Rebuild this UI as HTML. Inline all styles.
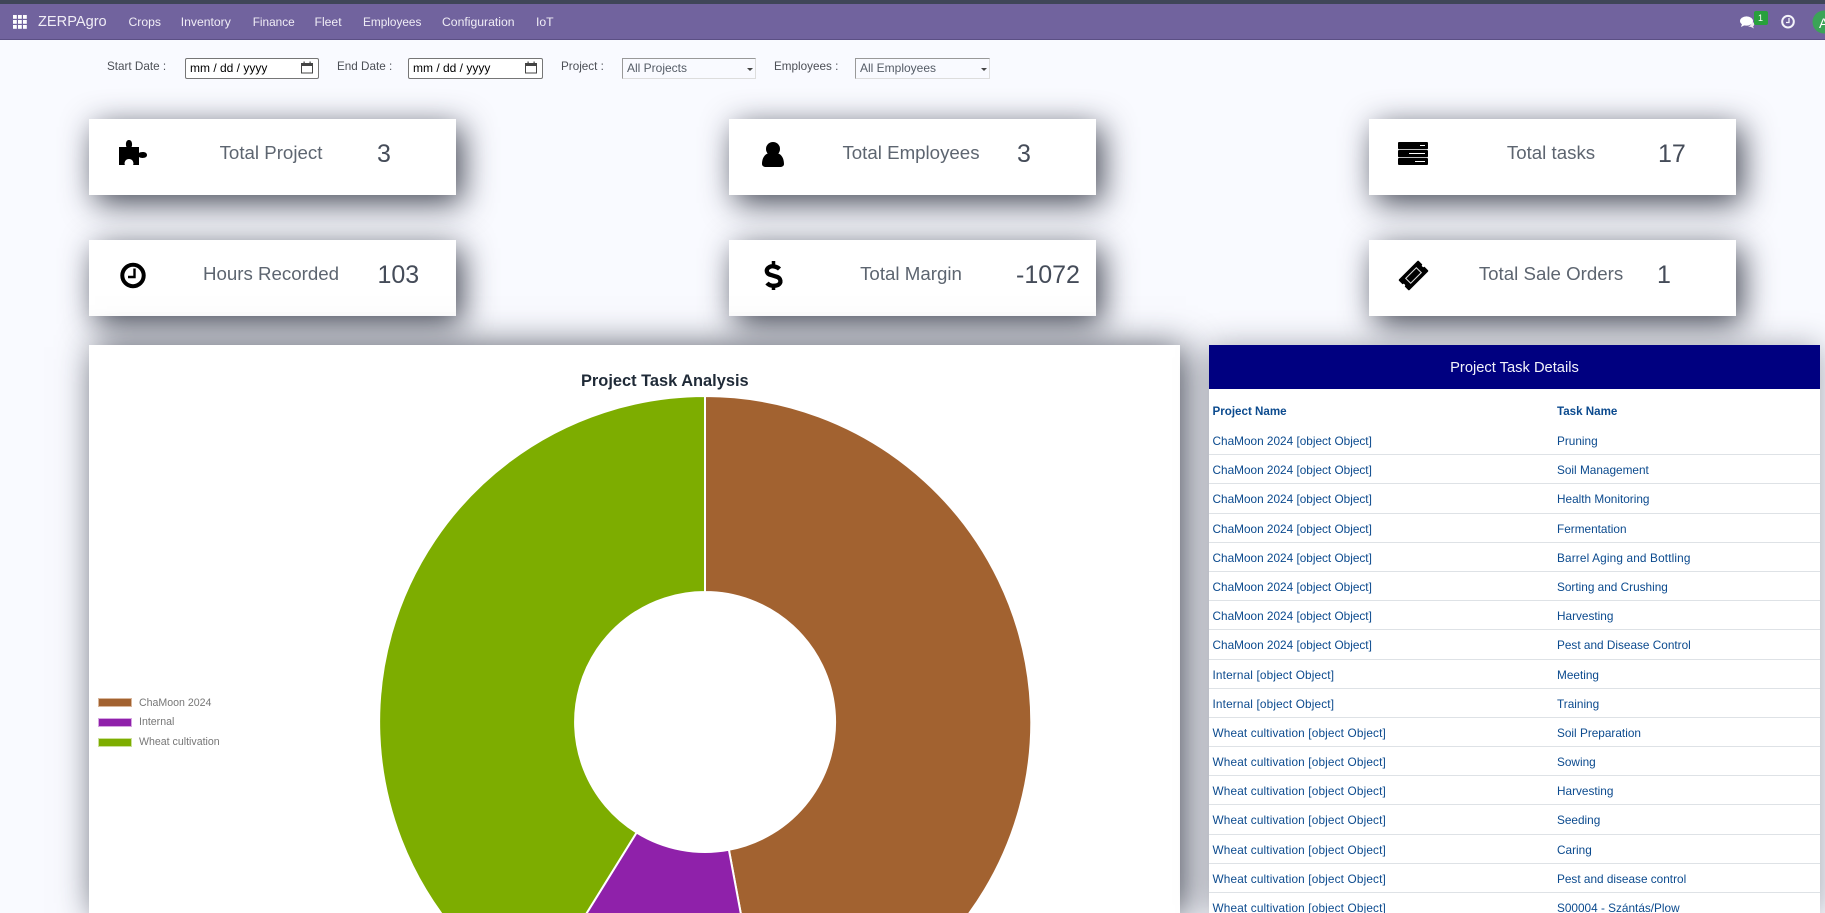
<!DOCTYPE html>
<html><head><meta charset="utf-8"><style>
html,body{margin:0;padding:0;width:1825px;height:913px;overflow:hidden;background:#f9faff;font-family:"Liberation Sans",sans-serif}
#w{position:relative;width:1825px;height:913px;overflow:hidden;background:#f9faff}
.a{position:absolute;white-space:nowrap}
#top{position:absolute;left:0;top:0;width:1825px;height:4px;background:#3f4658}
#nav{position:absolute;left:0;top:4px;width:1825px;height:35px;background:#71639e;border-bottom:1px solid #5b4f84}
.n{position:absolute;top:15px;font-size:12.2px;line-height:14px;color:#f0edf6;white-space:nowrap}
.f{position:absolute;top:60px;font-size:11.7px;line-height:14px;color:#4c4f56;white-space:nowrap}
.d{position:absolute;top:58px;height:21px;box-sizing:border-box;border:1px solid #767676;border-radius:2px;background:#fff;font-size:12px;line-height:18px;color:#000;padding-left:4px}
.s{position:absolute;top:58px;height:21px;box-sizing:border-box;border:1px solid;border-color:#999 #ddd #ddd #999;font-size:12px;line-height:18px;color:#555c66;padding-left:4px;background:#f9faff}
.s:after{content:"";position:absolute;right:2px;top:9px;border-left:3px solid transparent;border-right:3px solid transparent;border-top:3px solid #444}
.c{position:absolute;width:367px;height:76px;background:#fff;box-shadow:6px 8px 32px rgba(20,25,40,.8)}
.l{position:absolute;left:-1.5px;width:367px;text-align:center;top:23px;font-size:18.7px;line-height:22px;color:#5d6570}
.v{position:absolute;top:21px;font-size:25px;line-height:28px;color:#454c59}
#chart{position:absolute;left:89px;top:345px;width:1091px;height:568px;background:#fff;box-shadow:6px 2px 34px rgba(20,25,40,.75)}
#panel{position:absolute;left:1209px;top:345px;width:611px;height:568px;background:#fff;box-shadow:0 2px 30px rgba(20,25,40,.4)}
#pi{position:absolute;left:0;top:0;width:611px;height:568px;overflow:hidden}
#ph{height:44px;background:#000080;color:#f2f2fa;font-size:14.7px;line-height:46px;text-align:center}
.r{position:relative;height:29.2px;box-sizing:border-box;border-bottom:1px solid #dee2e6;font-size:11.8px;line-height:30px;color:#0b4a8e;white-space:nowrap}
.r span{position:absolute;left:3.5px}.r span+span{left:348px}
.r .w{letter-spacing:.15px}
.h{height:37px;border:0;line-height:45px;font-weight:bold;font-size:11.6px}
.lg{position:absolute;left:139px;font-size:10.6px;line-height:14px;color:#777;white-space:nowrap;filter:blur(.3px);z-index:3}
.sw{position:absolute;left:98px;width:34px;height:9px;box-sizing:border-box;border-width:1px;border-style:solid;z-index:3}
svg{position:absolute;left:0;top:0;overflow:hidden}
</style></head><body><div id="w">
<div id="top"></div><div id="nav"></div>
<svg width="1825" height="40" style="z-index:2">
<g fill="#fff"><rect x="13" y="15" width="3.8" height="3.8"/><rect x="18" y="15" width="3.8" height="3.8"/><rect x="23" y="15" width="3.8" height="3.8"/><rect x="13" y="20" width="3.8" height="3.8"/><rect x="18" y="20" width="3.8" height="3.8"/><rect x="23" y="20" width="3.8" height="3.8"/><rect x="13" y="25" width="3.8" height="3.8"/><rect x="18" y="25" width="3.8" height="3.8"/><rect x="23" y="25" width="3.8" height="3.8"/></g>
<ellipse cx="1746.5" cy="21" rx="6.5" ry="4.6" fill="#fff"/><path d="M1742 24l-1 3 4-2z" fill="#fff"/><path d="M1752 21.500c2.500 1 3 3.500 1 5l1 2-3-1.500-3-.5c2-.5 4-2.500 4-5z" fill="#f1e8f0"/>
<rect x="1754" y="11" width="14" height="14" rx="2" fill="#28a03c"/>
<circle cx="1788" cy="21.700" r="5.800" fill="none" stroke="#f4f4fa" stroke-width="2"/><path d="M1789 18v4.500h-3" fill="none" stroke="#f4f4fa" stroke-width="1.300"/>
<circle cx="1824" cy="22" r="11.500" fill="#3ba457"/>
</svg>
<div class="n" style="left:38px;top:14px;font-size:14.6px;line-height:16px">ZERPAgro</div>
<div class="n" style="left:128.500px">Crops</div><div class="n" style="left:180.700px">Inventory</div><div class="n" style="left:252.700px;font-size:11.8px">Finance</div><div class="n" style="left:314.500px">Fleet</div><div class="n" style="left:363px;font-size:11.8px">Employees</div><div class="n" style="left:442px">Configuration</div><div class="n" style="left:536px">IoT</div>
<div class="a" style="left:1758px;top:12px;width:7px;font-size:9px;line-height:12px;color:#fff;z-index:3">1</div>
<div class="a" style="left:1816px;top:15px;width:9px;overflow:hidden;font-size:14px;line-height:16px;color:#fff;z-index:3;padding-left:3px;box-sizing:border-box">A</div>

<div class="f" style="left:107px">Start Date :</div>
<div class="d" style="left:185px;width:134px">mm / dd / yyyy</div>
<div class="f" style="left:337px">End Date :</div>
<div class="d" style="left:408px;width:135px">mm / dd / yyyy</div>
<div class="f" style="left:561px">Project :</div>
<div class="s" style="left:622px;width:134px">All Projects</div>
<div class="f" style="left:774px">Employees :</div>
<div class="s" style="left:855px;width:135px">All Employees</div>
<svg width="1825" height="90" style="z-index:2">
<g fill="none" stroke="#444" stroke-width="1"><rect x="301.500" y="63.500" width="11" height="9.500"/><rect x="525.500" y="63.500" width="11" height="9.500"/></g>
<g fill="#444"><rect x="301" y="63" width="12" height="3"/><rect x="525" y="63" width="12" height="3"/><rect x="303.500" y="61.500" width="1.200" height="2"/><rect x="309.500" y="61.500" width="1.200" height="2"/><rect x="527.500" y="61.500" width="1.200" height="2"/><rect x="533.500" y="61.500" width="1.200" height="2"/></g>
</svg>

<div class="c" style="left:89px;top:119px"><div class="l">Total Project</div><div class="v" style="left:288px">3</div></div>
<div class="c" style="left:729px;top:119px"><div class="l">Total Employees</div><div class="v" style="left:288px">3</div></div>
<div class="c" style="left:1369px;top:119px"><div class="l">Total tasks</div><div class="v" style="left:289px">17</div></div>
<div class="c" style="left:89px;top:240px"><div class="l">Hours Recorded</div><div class="v" style="left:288.500px">103</div></div>
<div class="c" style="left:729px;top:240px"><div class="l">Total Margin</div><div class="v" style="left:287px">-1072</div></div>
<div class="c" style="left:1369px;top:240px"><div class="l">Total Sale Orders</div><div class="v" style="left:288px">1</div></div>

<div id="chart"></div>
<div id="panel"><div id="pi"><div id="ph">Project Task Details</div>
<div class="r h"><span>Project Name</span><span>Task Name</span></div>
<div class="r"><span>ChaMoon 2024 [object Object]</span><span>Pruning</span></div>
<div class="r"><span>ChaMoon 2024 [object Object]</span><span>Soil Management</span></div>
<div class="r"><span>ChaMoon 2024 [object Object]</span><span>Health Monitoring</span></div>
<div class="r"><span>ChaMoon 2024 [object Object]</span><span>Fermentation</span></div>
<div class="r"><span>ChaMoon 2024 [object Object]</span><span class="w">Barrel Aging and Bottling</span></div>
<div class="r"><span>ChaMoon 2024 [object Object]</span><span>Sorting and Crushing</span></div>
<div class="r"><span>ChaMoon 2024 [object Object]</span><span>Harvesting</span></div>
<div class="r"><span>ChaMoon 2024 [object Object]</span><span>Pest and Disease Control</span></div>
<div class="r"><span class="w">Internal [object Object]</span><span>Meeting</span></div>
<div class="r"><span class="w">Internal [object Object]</span><span>Training</span></div>
<div class="r"><span class="w">Wheat cultivation [object Object]</span><span>Soil Preparation</span></div>
<div class="r"><span class="w">Wheat cultivation [object Object]</span><span>Sowing</span></div>
<div class="r"><span class="w">Wheat cultivation [object Object]</span><span>Harvesting</span></div>
<div class="r"><span class="w">Wheat cultivation [object Object]</span><span>Seeding</span></div>
<div class="r"><span class="w">Wheat cultivation [object Object]</span><span>Caring</span></div>
<div class="r"><span class="w">Wheat cultivation [object Object]</span><span>Pest and disease control</span></div>
<div class="r"><span class="w">Wheat cultivation [object Object]</span><span>S00004 - Szántás/Plow</span></div>
</div></div>

<svg width="1825" height="913" style="z-index:2">
<path transform="translate(119 140)" d="M0 7H7.500C6.500 5.500 6.500 0 10 0C13.500 0 13.500 5.500 12.500 7H20V13C22 11.500 28 11.500 28 15C28 18.500 22 18.500 20 17V25H14C15 24 14.500 19 10 19C5.500 19 5 24 6 25H0Z"/>
<path d="M762 164C762 158 765 154 768 153.500C771 156 775 156 778 153.500C781 154 784 158 784 164C784 166 782 167 780 167H766C764 167 762 166 762 164Z"/><circle cx="773" cy="149" r="7"/>
<rect x="1398" y="142" width="30" height="7.300" rx="1"/><rect x="1398" y="150" width="30" height="7.300" rx="1"/><rect x="1398" y="158" width="30" height="7" rx="1"/>
<g stroke="#fff" stroke-width="1"><path d="M1420 145.500h5M1409 153.500h16M1415 161.500h10"/></g>
<circle cx="133" cy="275.500" r="10.700" fill="none" stroke="#000" stroke-width="4"/><path d="M134.500 268.500V277H128" fill="none" stroke="#000" stroke-width="2.400"/>
<path d="M779.500 269C777 266.500 772 265.500 769.500 267C765 269.500 766.500 274 771 275L776 276.500C781.500 278 781.500 283 778 285C774 286.500 769.500 286 767 283" fill="none" stroke="#000" stroke-width="4.300"/><path d="M773.500 261v5M773.500 285v5" stroke="#000" stroke-width="3.500"/>
<g transform="translate(1413.500 275.500) rotate(-45)"><rect x="-14" y="-7.500" width="28" height="15" rx="1"/><rect x="-7.500" y="-3.500" width="15" height="7" fill="none" stroke="#d8d8d8" stroke-width="1.100"/><circle cx="-14" cy="0" r="1.500" fill="#fff"/><circle cx="14" cy="0" r="1.500" fill="#fff"/></g>

<g stroke="#fff" stroke-width="2">
<path fill="#a26230" d="M705 396A326 326 0 0 1 764.900 1042.500L728.900 849.800A130 130 0 0 0 705 592Z"/>
<path fill="#8f21aa" d="M764.900 1042.500A326 326 0 0 1 533.400 999.100L636.600 832.500A130 130 0 0 0 728.900 849.800Z"/>
<path fill="#7dad00" d="M533.400 999.100A326 326 0 0 1 705 396V592A130 130 0 0 0 636.600 832.500Z"/>
</g>
</svg>
<div class="a" style="left:581px;top:371px;font-size:16.400px;line-height:20px;font-weight:bold;color:#1f2a37;z-index:3">Project Task Analysis</div>
<div class="sw" style="top:698px;background:#a26230;border-color:#d9b79c"></div><div class="lg" style="top:696px">ChaMoon 2024</div>
<div class="sw" style="top:718px;background:#8f21aa;border-color:#d6a6e2"></div><div class="lg" style="top:715px">Internal</div>
<div class="sw" style="top:738px;background:#7dad00;border-color:#cbe09a"></div><div class="lg" style="top:735px">Wheat cultivation</div>
</div></body></html>
